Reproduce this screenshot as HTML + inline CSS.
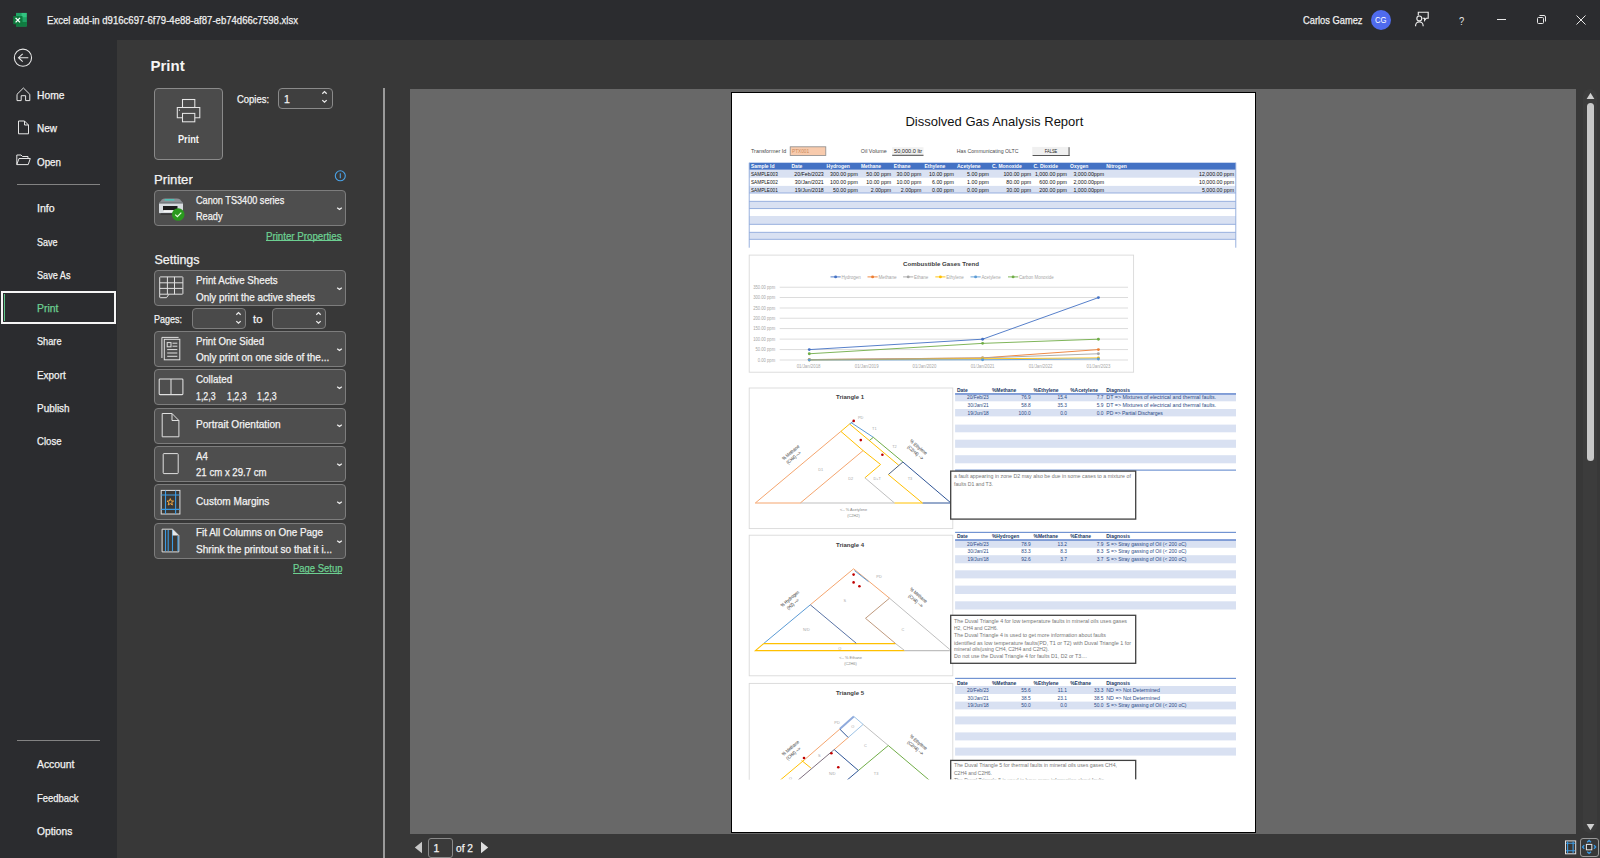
<!DOCTYPE html>
<html><head><meta charset="utf-8">
<style>
*{margin:0;padding:0;box-sizing:border-box}
html,body{width:1600px;height:858px;overflow:hidden;background:#383838;font-family:"Liberation Sans",sans-serif;color:#fff;position:relative}
.a{position:absolute}
.t{position:absolute;line-height:0;white-space:nowrap;transform-origin:0 0;-webkit-text-stroke:0.25px currentColor}
svg{overflow:visible}
</style></head>
<body>
<div class="a" style="left:0px;top:0px;width:1600px;height:40px;background:#2b2c2f"></div>
<div class="a" style="left:0px;top:40px;width:117px;height:818px;background:#2b2c2f"></div>
<svg class="a" style="left:12px;top:12px;" width="16" height="16" viewBox="0 0 16 16"><rect x="4" y="0.9" width="10.7" height="13.6" rx="0.6" fill="#1e9e5e"/>
<rect x="9.3" y="0.9" width="5.4" height="4.6" fill="#33c481"/><rect x="4" y="0.9" width="5.3" height="4.6" fill="#21a366"/>
<rect x="9.3" y="5.5" width="5.4" height="4.5" fill="#21a366"/>
<rect x="4" y="10" width="10.7" height="4.5" fill="#107c41"/>
<rect x="1.2" y="4" width="9.3" height="8.2" rx="0.6" fill="#0f7a3e"/>
<path d="M3.6 5.9 L8 10.4 M8 5.9 L3.6 10.4" stroke="#fff" stroke-width="1.35"/></svg>
<div class="t" style="left:47.00px;top:19.83px;font-size:10.5px;color:#f0f0f0;transform:scaleX(0.9111);">Excel add-in d916c697-6f79-4e88-af87-eb74d66c7598.xlsx</div>
<div class="t" style="left:1302.50px;top:20.23px;font-size:10.5px;color:#f0f0f0;transform:scaleX(0.8868);">Carlos Gamez</div>
<div class="a" style="left:1371px;top:10px;width:20px;height:20px;border-radius:50%;background:#4f6bed"></div>
<div class="t" style="left:1375.45px;top:20.14px;font-size:9px;color:#ffffff;transform:scaleX(0.8519);-webkit-text-stroke:0">CG</div>
<svg class="a" style="left:1408px;top:8px;" width="28" height="22" viewBox="0 0 28 22"><g fill="none" stroke="#ececec" stroke-width="1.15">
<path d="M10.3 7.6 V4.2 H20.2 V10.2 H18.3 L16.6 12.3 V10.2 H14.6"/>
<circle cx="11.3" cy="10.4" r="2.45"/>
<path d="M7.6 18.2 V17.6 A3.75 3.75 0 0 1 15.1 17.6 V18.2"/></g></svg>
<div class="t" style="left:1458.60px;top:20.66px;font-size:11px;color:#e8e8e8;transform:scaleX(0.8501);-webkit-text-stroke:0">?</div>
<div class="a" style="left:1497px;top:19px;width:9px;height:1px;background:#e8e8e8"></div>
<svg class="a" style="left:1536px;top:14px;" width="11" height="11" viewBox="0 0 11 11"><g fill="none" stroke="#e8e8e8" stroke-width="1">
<rect x="1.5" y="3.5" width="6" height="6" rx="1"/>
<path d="M3.5 1.5 H8 Q9.5 1.5 9.5 3 V7.5"/></g></svg>
<svg class="a" style="left:1576px;top:15px;" width="10" height="10" viewBox="0 0 10 10"><path d="M0.5 0.5 L9.5 9.5 M9.5 0.5 L0.5 9.5" stroke="#e8e8e8" stroke-width="1"/></svg>
<svg class="a" style="left:13px;top:48px;" width="20" height="20" viewBox="0 0 20 20"><g fill="none" stroke="#e6e6e6" stroke-width="1.1">
<circle cx="9.95" cy="9.7" r="8.6"/>
<path d="M5.4 9.7 H15.3 M9.7 5.9 L5.5 9.7 L9.7 13.6"/></g></svg>
<svg class="a" style="left:16px;top:87px;" width="15" height="15" viewBox="0 0 15 15"><path d="M1 7.3 L7.4 1 L13.8 7.3 V13.6 H9.6 V8.7 H5.2 V13.6 H1 Z" fill="none" stroke="#e6e6e6" stroke-width="1"/></svg>
<svg class="a" style="left:17px;top:120px;" width="13" height="15" viewBox="0 0 13 15"><path d="M1.5 1 H7.5 L11.5 5 V13.8 H1.5 Z M7.5 1 V5 H11.5" fill="none" stroke="#e6e6e6" stroke-width="1"/></svg>
<svg class="a" style="left:16px;top:154px;" width="15" height="12" viewBox="0 0 15 12"><path d="M0.8 10.6 V1 H5 L6.5 2.5 H12 V4.5 M0.8 10.6 L3 4.5 H14.3 L12.2 10.6 Z" fill="none" stroke="#e6e6e6" stroke-width="1"/></svg>
<div class="t" style="left:36.70px;top:94.83px;font-size:10.5px;color:#f3f3f3;transform:scaleX(0.9783);">Home</div>
<div class="t" style="left:36.70px;top:128.23px;font-size:10.5px;color:#f3f3f3;transform:scaleX(0.9522);">New</div>
<div class="t" style="left:36.70px;top:161.63px;font-size:10.5px;color:#f3f3f3;transform:scaleX(0.9344);">Open</div>
<div class="t" style="left:36.70px;top:208.33px;font-size:10.5px;color:#f3f3f3;transform:scaleX(1.0107);">Info</div>
<div class="t" style="left:36.70px;top:241.83px;font-size:10.5px;color:#f3f3f3;transform:scaleX(0.8566);">Save</div>
<div class="t" style="left:36.70px;top:274.83px;font-size:10.5px;color:#f3f3f3;transform:scaleX(0.8696);">Save As</div>
<div class="t" style="left:36.70px;top:341.23px;font-size:10.5px;color:#f3f3f3;transform:scaleX(0.8745);">Share</div>
<div class="t" style="left:36.70px;top:374.93px;font-size:10.5px;color:#f3f3f3;transform:scaleX(0.9458);">Export</div>
<div class="t" style="left:36.70px;top:408.43px;font-size:10.5px;color:#f3f3f3;transform:scaleX(0.9467);">Publish</div>
<div class="t" style="left:36.70px;top:441.43px;font-size:10.5px;color:#f3f3f3;transform:scaleX(0.9127);">Close</div>
<div class="t" style="left:36.70px;top:764.43px;font-size:10.5px;color:#f3f3f3;transform:scaleX(0.9885);">Account</div>
<div class="t" style="left:36.70px;top:797.68px;font-size:10.5px;color:#f3f3f3;transform:scaleX(0.9001);">Feedback</div>
<div class="t" style="left:36.70px;top:830.93px;font-size:10.5px;color:#f3f3f3;transform:scaleX(0.9742);">Options</div>
<div class="a" style="left:17px;top:184px;width:83px;height:1px;background:#838383"></div>
<div class="a" style="left:17px;top:740px;width:83px;height:1px;background:#838383"></div>
<div class="a" style="left:1px;top:291px;width:115px;height:33px;border:2px solid #f5f5f5;background:#2b2c2f"></div>
<div class="a" style="left:3.5px;top:294px;width:1.6px;height:26.5px;background:#5cc486"></div>
<div class="t" style="left:36.50px;top:307.83px;font-size:10.5px;color:#6ccf91;transform:scaleX(0.9912);">Print</div>
<div class="t" style="left:150.50px;top:65.90px;font-size:15px;color:#f5f5f5;font-weight:bold;-webkit-text-stroke:0">Print</div>
<div class="a" style="left:154px;top:88px;width:69px;height:72px;background:#4b4b4b;border:1px solid #8a8a8a;border-radius:4px"></div>
<svg class="a" style="left:176px;top:98px;" width="25" height="25" viewBox="0 0 25 25"><g fill="none" stroke="#e6e6e6" stroke-width="1.05">
<rect x="6.5" y="1.5" width="12.3" height="8"/>
<path d="M6.5 19.8 H1.3 V9.5 H23.8 V19.8 H18.8"/>
<rect x="6.5" y="15.4" width="12.3" height="8.4"/>
<path d="M3.4 11.5 V12.8"/></g></svg>
<div class="t" style="left:177.80px;top:139.03px;font-size:10.5px;color:#f5f5f5;font-weight:bold;transform:scaleX(0.8739);-webkit-text-stroke:0">Print</div>
<div class="t" style="left:237.20px;top:99.33px;font-size:10.5px;color:#f3f3f3;transform:scaleX(0.9017);">Copies:</div>
<div class="a" style="left:278px;top:88px;width:55px;height:21px;background:#3f3f3f;border:1px solid #8a8a8a;border-radius:4px"></div>
<div class="t" style="left:284.00px;top:99.33px;font-size:10.5px;color:#f3f3f3;">1</div>
<svg class="a" style="left:320.7px;top:90.1px;" width="7" height="14" viewBox="0 0 7 14"><path d="M1.3 3.7 L3.5 1.6 L5.7 3.7 M1.3 10.1 L3.5 12.2 L5.7 10.1" fill="none" stroke="#ececec" stroke-width="1.3"/></svg>
<div class="t" style="left:154.40px;top:179.75px;font-size:12.5px;color:#f3f3f3;transform:scaleX(1.0539);">Printer</div>
<svg class="a" style="left:334px;top:170px;" width="12" height="12" viewBox="0 0 12 12"><g fill="none" stroke="#4aa3e8" stroke-width="1.1"><circle cx="6.3" cy="5.8" r="5"/><path d="M6.3 3.3 V8.3"/></g></svg>
<div class="a" style="left:154px;top:190px;width:192px;height:36px;background:#4e4e4e;border:1px solid #7d7d7d;border-radius:4px"></div>
<svg class="a" style="left:335.6px;top:205.5px;" width="7" height="5" viewBox="0 0 7 5"><path d="M1.2 1.7 L3.5 3.5 L5.8 1.7" fill="none" stroke="#f0f0f0" stroke-width="1.25"/></svg>
<svg class="a" style="left:158px;top:197px;" width="28" height="26" viewBox="0 0 28 26">
<path d="M4 2.5 Q5 1.5 7 1.5 H19 Q21 1.5 22 2.5 L24.5 5.5 H1.5 Z" fill="#8a8e93"/>
<rect x="6.5" y="2.2" width="10" height="1.4" rx="0.7" fill="#3fd0c0"/>
<rect x="1" y="5.3" width="24" height="11" rx="0.8" fill="#d8dce0"/>
<rect x="1" y="5.3" width="24" height="1.2" fill="#5b5f63"/>
<rect x="5" y="9" width="14.5" height="4.2" fill="#1c1c1c"/>
<rect x="5.5" y="13.2" width="12" height="1.8" fill="#f4f4f4"/>
<rect x="2.5" y="16.3" width="17" height="1.4" fill="#333"/>
<circle cx="20.2" cy="17.5" r="6.3" fill="#2a9a1e"/>
<path d="M17.2 17.6 L19.4 19.7 L23.3 15.6" fill="none" stroke="#e8ffe0" stroke-width="1.2"/></svg>
<div class="t" style="left:196.20px;top:199.73px;font-size:10.5px;color:#f3f3f3;transform:scaleX(0.8701);">Canon TS3400 series</div>
<div class="t" style="left:196.20px;top:216.33px;font-size:10.5px;color:#f3f3f3;transform:scaleX(0.8731);">Ready</div>
<div class="t" style="left:266.40px;top:235.93px;font-size:10.5px;color:#6ccf91;transform:scaleX(0.9242);">Printer Properties</div>
<div class="a" style="left:266.4px;top:240.3px;width:75.5px;height:1px;background:#6ccf91"></div>
<div class="t" style="left:154.40px;top:259.75px;font-size:12.5px;color:#f3f3f3;">Settings</div>
<div class="a" style="left:154px;top:270.2px;width:192px;height:36px;background:#4e4e4e;border:1px solid #7d7d7d;border-radius:4px"></div>
<svg class="a" style="left:335.6px;top:285.7px;" width="7" height="5" viewBox="0 0 7 5"><path d="M1.2 1.7 L3.5 3.5 L5.8 1.7" fill="none" stroke="#f0f0f0" stroke-width="1.25"/></svg>
<svg class="a" style="left:158px;top:275px;" width="27" height="25" viewBox="0 0 27 25"><g fill="none" stroke="#e0e0e0" stroke-width="1">
<path d="M1.7 19.2 V2.5 Q1.7 1.9 2.3 1.9 H24.4 Q24.9 1.9 24.9 2.5 V18.5 Q24.9 19.2 24.3 19.2 H11 L8.5 22.7 H2.3 Q1.7 22.7 1.7 22.1 Z"/>
<path d="M1.7 7.8 H24.9 M1.7 13.4 H24.9 M9.4 1.9 V19.2 M16.5 1.9 V19.2 M1.7 19.2 H11"/></g></svg>
<div class="t" style="left:196.20px;top:280.03px;font-size:10.5px;color:#f3f3f3;transform:scaleX(0.9260);">Print Active Sheets</div>
<div class="t" style="left:196.20px;top:296.63px;font-size:10.5px;color:#f3f3f3;transform:scaleX(0.9397);">Only print the active sheets</div>
<div class="t" style="left:154.40px;top:319.13px;font-size:10.5px;color:#f3f3f3;transform:scaleX(0.8566);">Pages:</div>
<div class="a" style="left:192px;top:308.3px;width:54px;height:20.5px;background:#4a4a4a;border:1px solid #7d7d7d;border-radius:4px"></div>
<svg class="a" style="left:234.7px;top:310.6px;" width="7" height="14" viewBox="0 0 7 14"><path d="M1.3 3.7 L3.5 1.6 L5.7 3.7 M1.3 10.1 L3.5 12.2 L5.7 10.1" fill="none" stroke="#ececec" stroke-width="1.3"/></svg>
<div class="t" style="left:253.30px;top:319.13px;font-size:10.5px;color:#f3f3f3;transform:scaleX(1.0735);">to</div>
<div class="a" style="left:272px;top:308.3px;width:54px;height:20.5px;background:#4a4a4a;border:1px solid #7d7d7d;border-radius:4px"></div>
<svg class="a" style="left:314.7px;top:310.6px;" width="7" height="14" viewBox="0 0 7 14"><path d="M1.3 3.7 L3.5 1.6 L5.7 3.7 M1.3 10.1 L3.5 12.2 L5.7 10.1" fill="none" stroke="#ececec" stroke-width="1.3"/></svg>
<div class="a" style="left:154px;top:331.3px;width:192px;height:36px;background:#4e4e4e;border:1px solid #7d7d7d;border-radius:4px"></div>
<svg class="a" style="left:335.6px;top:346.8px;" width="7" height="5" viewBox="0 0 7 5"><path d="M1.2 1.7 L3.5 3.5 L5.8 1.7" fill="none" stroke="#f0f0f0" stroke-width="1.25"/></svg>
<svg class="a" style="left:160px;top:335px;" width="22" height="27" viewBox="0 0 22 27"><g fill="none" stroke="#e0e0e0" stroke-width="1">
<path d="M1.9 23 V2.4 H18.6"/>
<rect x="4.3" y="4.3" width="15.5" height="20.5"/>
<rect x="7.2" y="7.6" width="3.8" height="4.2"/>
<path d="M12.5 8.2 H17.3 M12.5 11.2 H17.3 M7.2 14.6 H17.3 M7.2 18 H17.3 M7.2 21.3 H17.3"/></g></svg>
<div class="t" style="left:196.20px;top:340.83px;font-size:10.5px;color:#f3f3f3;transform:scaleX(0.9174);">Print One Sided</div>
<div class="t" style="left:196.20px;top:357.43px;font-size:10.5px;color:#f3f3f3;transform:scaleX(0.9509);">Only print on one side of the...</div>
<div class="a" style="left:154px;top:369.4px;width:192px;height:36px;background:#4e4e4e;border:1px solid #7d7d7d;border-radius:4px"></div>
<svg class="a" style="left:335.6px;top:384.9px;" width="7" height="5" viewBox="0 0 7 5"><path d="M1.2 1.7 L3.5 3.5 L5.8 1.7" fill="none" stroke="#f0f0f0" stroke-width="1.25"/></svg>
<svg class="a" style="left:158px;top:378px;" width="26" height="18" viewBox="0 0 26 18"><g fill="none" stroke="#e0e0e0" stroke-width="1.05"><rect x="1.2" y="1" width="23.7" height="15.6" rx="0.8"/><path d="M13 1 V16.6"/></g></svg>
<div class="t" style="left:196.20px;top:379.43px;font-size:10.5px;color:#f3f3f3;transform:scaleX(0.9371);">Collated</div>
<div class="t" style="left:196.20px;top:395.83px;font-size:10.5px;color:#f3f3f3;transform:scaleX(0.8351);">1,2,3</div>
<div class="t" style="left:226.60px;top:395.83px;font-size:10.5px;color:#f3f3f3;transform:scaleX(0.8351);">1,2,3</div>
<div class="t" style="left:256.80px;top:395.83px;font-size:10.5px;color:#f3f3f3;transform:scaleX(0.8351);">1,2,3</div>
<div class="a" style="left:154px;top:407.9px;width:192px;height:36px;background:#4e4e4e;border:1px solid #7d7d7d;border-radius:4px"></div>
<svg class="a" style="left:335.6px;top:423.4px;" width="7" height="5" viewBox="0 0 7 5"><path d="M1.2 1.7 L3.5 3.5 L5.8 1.7" fill="none" stroke="#f0f0f0" stroke-width="1.25"/></svg>
<svg class="a" style="left:161px;top:412px;" width="20" height="26" viewBox="0 0 20 26"><path d="M1.2 1.5 H11 L17.9 8.5 V24.8 H1.2 Z M11 1.5 V8.5 H17.9" fill="none" stroke="#e0e0e0" stroke-width="1"/></svg>
<div class="t" style="left:196.20px;top:424.03px;font-size:10.5px;color:#f3f3f3;transform:scaleX(0.9601);">Portrait Orientation</div>
<div class="a" style="left:154px;top:446.3px;width:192px;height:36px;background:#4e4e4e;border:1px solid #7d7d7d;border-radius:4px"></div>
<svg class="a" style="left:335.6px;top:461.8px;" width="7" height="5" viewBox="0 0 7 5"><path d="M1.2 1.7 L3.5 3.5 L5.8 1.7" fill="none" stroke="#f0f0f0" stroke-width="1.25"/></svg>
<svg class="a" style="left:162px;top:452px;" width="18" height="23" viewBox="0 0 18 23"><rect x="1.2" y="1.6" width="15" height="20" rx="0.8" fill="none" stroke="#e0e0e0" stroke-width="1"/></svg>
<div class="t" style="left:196.20px;top:455.73px;font-size:10.5px;color:#f3f3f3;transform:scaleX(0.9266);">A4</div>
<div class="t" style="left:196.20px;top:472.33px;font-size:10.5px;color:#f3f3f3;transform:scaleX(0.9166);">21 cm x 29.7 cm</div>
<div class="a" style="left:154px;top:484.4px;width:192px;height:36px;background:#4e4e4e;border:1px solid #7d7d7d;border-radius:4px"></div>
<svg class="a" style="left:335.6px;top:499.9px;" width="7" height="5" viewBox="0 0 7 5"><path d="M1.2 1.7 L3.5 3.5 L5.8 1.7" fill="none" stroke="#f0f0f0" stroke-width="1.25"/></svg>
<svg class="a" style="left:160px;top:489px;" width="21" height="27" viewBox="0 0 21 27"><rect x="1.2" y="1.4" width="18.7" height="23.6" fill="#3b3834" stroke="#e0e0e0" stroke-width="1"/>
<path d="M5.5 1.4 V25 M15.6 1.4 V25 M1.2 6 H19.9 M1.2 20.4 H19.9" stroke="#3c9be3" stroke-width="1.1"/>
<path d="M10.3 9.6 L11.2 12 L13.6 12.1 L11.7 13.6 L12.4 16 L10.3 14.6 L8.2 16 L8.9 13.6 L7 12.1 L9.4 12 Z" fill="none" stroke="#f0a844" stroke-width="1"/></svg>
<div class="t" style="left:196.20px;top:500.83px;font-size:10.5px;color:#f3f3f3;transform:scaleX(0.9603);">Custom Margins</div>
<div class="a" style="left:154px;top:523.2px;width:192px;height:36px;background:#4e4e4e;border:1px solid #7d7d7d;border-radius:4px"></div>
<svg class="a" style="left:335.6px;top:538.7px;" width="7" height="5" viewBox="0 0 7 5"><path d="M1.2 1.7 L3.5 3.5 L5.8 1.7" fill="none" stroke="#f0f0f0" stroke-width="1.25"/></svg>
<svg class="a" style="left:161px;top:528px;" width="19" height="26" viewBox="0 0 19 26"><path d="M1.1 1.2 H11.5 L17.8 7.5 V23.9 H1.1 Z" fill="#3b3834" stroke="#e0e0e0" stroke-width="1"/>
<path d="M4.5 2 V23.2 M7.2 2 V23.2 M11.5 2 V23.2 M16.9 8 V23.2" stroke="#3c9be3" stroke-width="1.1"/>
<path d="M11.5 1.2 V7.5 H17.8 Z" fill="#e8e8e8"/></svg>
<div class="t" style="left:196.20px;top:532.33px;font-size:10.5px;color:#f3f3f3;transform:scaleX(0.9421);">Fit All Columns on One Page</div>
<div class="t" style="left:196.20px;top:549.03px;font-size:10.5px;color:#f3f3f3;transform:scaleX(0.9590);">Shrink the printout so that it i...</div>
<div class="t" style="left:292.60px;top:568.23px;font-size:10.5px;color:#6ccf91;transform:scaleX(0.9002);">Page Setup</div>
<div class="a" style="left:292.6px;top:572.8px;width:49.4px;height:1px;background:#6ccf91"></div>
<div class="a" style="left:383px;top:88px;width:2px;height:770px;background:#9a9a9a"></div>
<div class="a" style="left:410px;top:89px;width:1166px;height:745px;background:#686868"></div>
<div class="a" style="left:1583px;top:89px;width:14px;height:744px;background:#3c3c3c;border-radius:7px"></div>
<svg class="a" style="left:1586px;top:92px;" width="9" height="8" viewBox="0 0 9 8"><path d="M0.6 7 L4.5 0.8 L8.4 7 Z" fill="#d0d0d0"/></svg>
<div class="a" style="left:1586.5px;top:103px;width:7.5px;height:358px;background:#c8c8c8;border-radius:4px"></div>
<svg class="a" style="left:1586px;top:823px;" width="9" height="8" viewBox="0 0 9 8"><path d="M0.6 1 L4.5 7.2 L8.4 1 Z" fill="#d0d0d0"/></svg>
<svg class="a" style="left:414px;top:841px;" width="9" height="13" viewBox="0 0 9 13"><path d="M8 0.8 V12.2 L0.8 6.5 Z" fill="#c8c8c8"/></svg>
<div class="a" style="left:428px;top:837.5px;width:25px;height:20px;background:#3a3a3a;border:1px solid #8a8a8a;border-radius:3px"></div>
<div class="t" style="left:433.50px;top:848.43px;font-size:10.5px;color:#f3f3f3;">1</div>
<div class="t" style="left:455.50px;top:848.43px;font-size:10.5px;color:#f3f3f3;transform:scaleX(0.9708);">of 2</div>
<svg class="a" style="left:480px;top:841px;" width="9" height="13" viewBox="0 0 9 13"><path d="M1 0.8 V12.2 L8.2 6.5 Z" fill="#e0e0e0"/></svg>
<svg class="a" style="left:1564px;top:839px;" width="14" height="17" viewBox="0 0 14 17"><rect x="1.5" y="1.9" width="10.2" height="12.9" fill="#3a3531" stroke="#e0e0e0" stroke-width="1"/>
<path d="M3.6 2.4 V14.3 M9.1 2.4 V14.3 M2 4.3 H11.2 M2 11.8 H11.2" stroke="#3c9be3" stroke-width="1.1"/></svg>
<div class="a" style="left:1580px;top:838px;width:18.5px;height:18.5px;border:1px solid #9a9a9a;border-radius:3px"></div>
<svg class="a" style="left:1580px;top:838px;" width="19" height="19" viewBox="0 0 19 19"><rect x="6.4" y="6.4" width="5.4" height="5.4" fill="#2e2e2e" stroke="#e6e6e6" stroke-width="1"/>
<path d="M7.2 4.2 L9.1 2.5 L11 4.2 M7.2 13.8 L9.1 15.4 L11 13.8 M4.2 7.1 L2.6 9 L4.2 10.9 M14 7.1 L15.6 9 L14 10.9" fill="none" stroke="#3c9be3" stroke-width="1.4"/></svg>
<div class="a" style="left:731px;top:92px;width:525px;height:741px;background:#fff;border:1px solid #000"></div>
<svg class="a" style="left:0;top:0;font-family:'Liberation Sans',sans-serif" width="1600" height="858" viewBox="0 0 1600 858"><clipPath id="pc"><rect x="733" y="93" width="521" height="686.8"/></clipPath><g clip-path="url(#pc)"><text x="905.40" y="125.98" font-size="13" fill="#111" textLength="177.90" lengthAdjust="spacingAndGlyphs" text-anchor="start">Dissolved Gas Analysis Report</text>
<text x="751.00" y="153.17" font-size="5.2" fill="#4a4a4a" textLength="35.20" lengthAdjust="spacingAndGlyphs" text-anchor="start">Transformer Id</text>
<rect x="790.20" y="146.80" width="35.60" height="8.70" fill="#f8cbad" stroke="#8a8a8a" stroke-width="0.8"/>
<text x="792.00" y="153.17" font-size="5.2" fill="#c98a5c" textLength="17.00" lengthAdjust="spacingAndGlyphs" text-anchor="start">PTX001</text>
<text x="860.80" y="153.17" font-size="5.2" fill="#4a4a4a" textLength="26.00" lengthAdjust="spacingAndGlyphs" text-anchor="start">Oil Volume</text>
<rect x="892.20" y="147.20" width="31.30" height="8.30" fill="#f2f2f2"/>
<rect x="892.20" y="154.80" width="31.30" height="0.90" fill="#333"/>
<text x="894.00" y="153.17" font-size="5.2" fill="#222" textLength="28.20" lengthAdjust="spacingAndGlyphs" text-anchor="start">50,000.0 ltr</text>
<text x="956.80" y="153.17" font-size="5.2" fill="#4a4a4a" textLength="61.70" lengthAdjust="spacingAndGlyphs" text-anchor="start">Has Communicating OLTC</text>
<rect x="1032.20" y="146.90" width="37.10" height="8.90" fill="#f0f0f0"/>
<rect x="1032.60" y="155.00" width="37.00" height="0.90" fill="#444"/>
<rect x="1068.60" y="147.20" width="0.90" height="8.70" fill="#444"/>
<text x="1051.00" y="153.17" font-size="5.2" fill="#222" textLength="12.50" lengthAdjust="spacingAndGlyphs" text-anchor="middle">FALSE</text>
<rect x="749.20" y="162.70" width="486.60" height="7.10" fill="#4472c4"/>
<rect x="749.20" y="169.80" width="486.60" height="7.90" fill="#d9e1f2"/>
<rect x="749.20" y="185.90" width="486.60" height="7.10" fill="#d9e1f2"/>
<rect x="749.20" y="201.30" width="486.60" height="7.30" fill="#d9e1f2"/>
<rect x="749.20" y="216.00" width="486.60" height="8.30" fill="#d9e1f2"/>
<rect x="749.20" y="232.30" width="486.60" height="7.00" fill="#d9e1f2"/>
<rect x="749.20" y="192.55" width="486.60" height="0.90" fill="#8ea9db"/>
<rect x="749.20" y="200.85" width="486.60" height="0.90" fill="#8ea9db"/>
<rect x="749.20" y="208.15" width="486.60" height="0.90" fill="#8ea9db"/>
<rect x="749.20" y="223.85" width="486.60" height="0.90" fill="#8ea9db"/>
<rect x="749.20" y="231.85" width="486.60" height="0.90" fill="#8ea9db"/>
<rect x="749.20" y="238.85" width="486.60" height="0.90" fill="#8ea9db"/>
<rect x="748.75" y="162.70" width="0.90" height="85.00" fill="#8ea9db"/>
<rect x="1235.35" y="162.70" width="0.90" height="85.00" fill="#8ea9db"/>
<text x="750.90" y="168.27" font-size="5.2" fill="#ffffff" textLength="23.58" lengthAdjust="spacingAndGlyphs" text-anchor="start" font-weight="bold">Sample Id</text>
<text x="791.50" y="168.27" font-size="5.2" fill="#ffffff" textLength="10.82" lengthAdjust="spacingAndGlyphs" text-anchor="start" font-weight="bold">Date</text>
<text x="826.60" y="168.27" font-size="5.2" fill="#ffffff" textLength="23.30" lengthAdjust="spacingAndGlyphs" text-anchor="start" font-weight="bold">Hydrogen</text>
<text x="860.90" y="168.27" font-size="5.2" fill="#ffffff" textLength="20.25" lengthAdjust="spacingAndGlyphs" text-anchor="start" font-weight="bold">Methane</text>
<text x="893.80" y="168.27" font-size="5.2" fill="#ffffff" textLength="16.64" lengthAdjust="spacingAndGlyphs" text-anchor="start" font-weight="bold">Ethane</text>
<text x="924.50" y="168.27" font-size="5.2" fill="#ffffff" textLength="20.80" lengthAdjust="spacingAndGlyphs" text-anchor="start" font-weight="bold">Ethylene</text>
<text x="957.00" y="168.27" font-size="5.2" fill="#ffffff" textLength="23.58" lengthAdjust="spacingAndGlyphs" text-anchor="start" font-weight="bold">Acetylene</text>
<text x="992.00" y="168.27" font-size="5.2" fill="#ffffff" textLength="29.67" lengthAdjust="spacingAndGlyphs" text-anchor="start" font-weight="bold">C. Monoxide</text>
<text x="1033.50" y="168.27" font-size="5.2" fill="#ffffff" textLength="24.41" lengthAdjust="spacingAndGlyphs" text-anchor="start" font-weight="bold">C. Dioxide</text>
<text x="1070.10" y="168.27" font-size="5.2" fill="#ffffff" textLength="18.31" lengthAdjust="spacingAndGlyphs" text-anchor="start" font-weight="bold">Oxygen</text>
<text x="1106.20" y="168.27" font-size="5.2" fill="#ffffff" textLength="20.52" lengthAdjust="spacingAndGlyphs" text-anchor="start" font-weight="bold">Nitrogen</text>
<text x="751.00" y="176.37" font-size="5.2" fill="#111" textLength="26.80" lengthAdjust="spacingAndGlyphs" text-anchor="start">SAMPLE003</text>
<text x="823.80" y="176.37" font-size="5.2" fill="#111" textLength="29.49" lengthAdjust="spacingAndGlyphs" text-anchor="end">20/Feb/2023</text>
<text x="857.80" y="176.37" font-size="5.2" fill="#111" textLength="27.74" lengthAdjust="spacingAndGlyphs" text-anchor="end">300.00 ppm</text>
<text x="891.20" y="176.37" font-size="5.2" fill="#111" textLength="24.82" lengthAdjust="spacingAndGlyphs" text-anchor="end">50.00 ppm</text>
<text x="921.30" y="176.37" font-size="5.2" fill="#111" textLength="24.82" lengthAdjust="spacingAndGlyphs" text-anchor="end">30.00 ppm</text>
<text x="953.90" y="176.37" font-size="5.2" fill="#111" textLength="24.82" lengthAdjust="spacingAndGlyphs" text-anchor="end">10.00 ppm</text>
<text x="989.00" y="176.37" font-size="5.2" fill="#111" textLength="21.90" lengthAdjust="spacingAndGlyphs" text-anchor="end">5.00 ppm</text>
<text x="1031.20" y="176.37" font-size="5.2" fill="#111" textLength="27.74" lengthAdjust="spacingAndGlyphs" text-anchor="end">100.00 ppm</text>
<text x="1067.00" y="176.37" font-size="5.2" fill="#111" textLength="32.12" lengthAdjust="spacingAndGlyphs" text-anchor="end">1,000.00 ppm</text>
<text x="1104.10" y="176.37" font-size="5.2" fill="#111" textLength="30.66" lengthAdjust="spacingAndGlyphs" text-anchor="end">3,000.00ppm</text>
<text x="1234.10" y="176.37" font-size="5.2" fill="#111" textLength="35.04" lengthAdjust="spacingAndGlyphs" text-anchor="end">12,000.00 ppm</text>
<text x="751.00" y="183.97" font-size="5.2" fill="#111" textLength="26.80" lengthAdjust="spacingAndGlyphs" text-anchor="start">SAMPLE002</text>
<text x="823.80" y="183.97" font-size="5.2" fill="#111" textLength="28.91" lengthAdjust="spacingAndGlyphs" text-anchor="end">30/Jan/2021</text>
<text x="857.80" y="183.97" font-size="5.2" fill="#111" textLength="27.74" lengthAdjust="spacingAndGlyphs" text-anchor="end">100.00 ppm</text>
<text x="891.20" y="183.97" font-size="5.2" fill="#111" textLength="24.82" lengthAdjust="spacingAndGlyphs" text-anchor="end">10.00 ppm</text>
<text x="921.30" y="183.97" font-size="5.2" fill="#111" textLength="24.82" lengthAdjust="spacingAndGlyphs" text-anchor="end">10.00 ppm</text>
<text x="953.90" y="183.97" font-size="5.2" fill="#111" textLength="21.90" lengthAdjust="spacingAndGlyphs" text-anchor="end">6.00 ppm</text>
<text x="989.00" y="183.97" font-size="5.2" fill="#111" textLength="21.90" lengthAdjust="spacingAndGlyphs" text-anchor="end">1.00 ppm</text>
<text x="1031.20" y="183.97" font-size="5.2" fill="#111" textLength="24.82" lengthAdjust="spacingAndGlyphs" text-anchor="end">80.00 ppm</text>
<text x="1067.00" y="183.97" font-size="5.2" fill="#111" textLength="27.74" lengthAdjust="spacingAndGlyphs" text-anchor="end">600.00 ppm</text>
<text x="1104.10" y="183.97" font-size="5.2" fill="#111" textLength="30.66" lengthAdjust="spacingAndGlyphs" text-anchor="end">2,000.00ppm</text>
<text x="1234.10" y="183.97" font-size="5.2" fill="#111" textLength="35.04" lengthAdjust="spacingAndGlyphs" text-anchor="end">10,000.00 ppm</text>
<text x="751.00" y="191.57" font-size="5.2" fill="#111" textLength="26.80" lengthAdjust="spacingAndGlyphs" text-anchor="start">SAMPLE001</text>
<text x="823.80" y="191.57" font-size="5.2" fill="#111" textLength="28.91" lengthAdjust="spacingAndGlyphs" text-anchor="end">19/Jun/2018</text>
<text x="857.80" y="191.57" font-size="5.2" fill="#111" textLength="24.82" lengthAdjust="spacingAndGlyphs" text-anchor="end">50.00 ppm</text>
<text x="891.20" y="191.57" font-size="5.2" fill="#111" textLength="20.44" lengthAdjust="spacingAndGlyphs" text-anchor="end">2.00ppm</text>
<text x="921.30" y="191.57" font-size="5.2" fill="#111" textLength="20.44" lengthAdjust="spacingAndGlyphs" text-anchor="end">2.00ppm</text>
<text x="953.90" y="191.57" font-size="5.2" fill="#111" textLength="21.90" lengthAdjust="spacingAndGlyphs" text-anchor="end">0.00 ppm</text>
<text x="989.00" y="191.57" font-size="5.2" fill="#111" textLength="21.90" lengthAdjust="spacingAndGlyphs" text-anchor="end">0.00 ppm</text>
<text x="1031.20" y="191.57" font-size="5.2" fill="#111" textLength="24.82" lengthAdjust="spacingAndGlyphs" text-anchor="end">30.00 ppm</text>
<text x="1067.00" y="191.57" font-size="5.2" fill="#111" textLength="27.74" lengthAdjust="spacingAndGlyphs" text-anchor="end">200.00 ppm</text>
<text x="1104.10" y="191.57" font-size="5.2" fill="#111" textLength="30.66" lengthAdjust="spacingAndGlyphs" text-anchor="end">1,000.00ppm</text>
<text x="1234.10" y="191.57" font-size="5.2" fill="#111" textLength="32.12" lengthAdjust="spacingAndGlyphs" text-anchor="end">5,000.00 ppm</text>
<rect x="749.20" y="255.10" width="384.40" height="117.10" fill="#fff" stroke="#d9d9d9" stroke-width="0.9"/>
<text x="941.00" y="266.03" font-size="6.2" fill="#404040" textLength="76.00" lengthAdjust="spacingAndGlyphs" text-anchor="middle" font-weight="bold">Combustible Gases Trend</text>
<rect x="779.70" y="359.55" width="348.30" height="0.90" fill="#d9d9d9"/>
<text x="775.10" y="361.66" font-size="4.6" fill="#a6a6a6" textLength="17.26" lengthAdjust="spacingAndGlyphs" text-anchor="end">0.00 ppm</text>
<rect x="779.70" y="349.15" width="348.30" height="0.90" fill="#d9d9d9"/>
<text x="775.10" y="351.26" font-size="4.6" fill="#a6a6a6" textLength="19.56" lengthAdjust="spacingAndGlyphs" text-anchor="end">50.00 ppm</text>
<rect x="779.70" y="338.65" width="348.30" height="0.90" fill="#d9d9d9"/>
<text x="775.10" y="340.76" font-size="4.6" fill="#a6a6a6" textLength="21.86" lengthAdjust="spacingAndGlyphs" text-anchor="end">100.00 ppm</text>
<rect x="779.70" y="328.15" width="348.30" height="0.90" fill="#d9d9d9"/>
<text x="775.10" y="330.26" font-size="4.6" fill="#a6a6a6" textLength="21.86" lengthAdjust="spacingAndGlyphs" text-anchor="end">150.00 ppm</text>
<rect x="779.70" y="317.75" width="348.30" height="0.90" fill="#d9d9d9"/>
<text x="775.10" y="319.86" font-size="4.6" fill="#a6a6a6" textLength="21.86" lengthAdjust="spacingAndGlyphs" text-anchor="end">200.00 ppm</text>
<rect x="779.70" y="307.55" width="348.30" height="0.90" fill="#d9d9d9"/>
<text x="775.10" y="309.66" font-size="4.6" fill="#a6a6a6" textLength="21.86" lengthAdjust="spacingAndGlyphs" text-anchor="end">250.00 ppm</text>
<rect x="779.70" y="297.05" width="348.30" height="0.90" fill="#d9d9d9"/>
<text x="775.10" y="299.16" font-size="4.6" fill="#a6a6a6" textLength="21.86" lengthAdjust="spacingAndGlyphs" text-anchor="end">300.00 ppm</text>
<rect x="779.70" y="286.75" width="348.30" height="0.90" fill="#d9d9d9"/>
<text x="775.10" y="288.86" font-size="4.6" fill="#a6a6a6" textLength="21.86" lengthAdjust="spacingAndGlyphs" text-anchor="end">350.00 ppm</text>
<text x="808.60" y="367.86" font-size="4.6" fill="#a6a6a6" textLength="23.80" lengthAdjust="spacingAndGlyphs" text-anchor="middle">01/Jan/2018</text>
<text x="866.70" y="367.86" font-size="4.6" fill="#a6a6a6" textLength="23.80" lengthAdjust="spacingAndGlyphs" text-anchor="middle">01/Jan/2019</text>
<text x="924.40" y="367.86" font-size="4.6" fill="#a6a6a6" textLength="23.80" lengthAdjust="spacingAndGlyphs" text-anchor="middle">01/Jan/2020</text>
<text x="982.60" y="367.86" font-size="4.6" fill="#a6a6a6" textLength="23.80" lengthAdjust="spacingAndGlyphs" text-anchor="middle">01/Jan/2021</text>
<text x="1040.60" y="367.86" font-size="4.6" fill="#a6a6a6" textLength="23.80" lengthAdjust="spacingAndGlyphs" text-anchor="middle">01/Jan/2022</text>
<text x="1098.50" y="367.86" font-size="4.6" fill="#a6a6a6" textLength="23.80" lengthAdjust="spacingAndGlyphs" text-anchor="middle">01/Jan/2023</text>
<path d="M809.30 349.60 L982.60 339.20 L1098.40 297.60" fill="none" stroke="#4472c4" stroke-width="0.9" stroke-linejoin="miter"/>
<circle cx="809.30" cy="349.60" r="1.45" fill="#4472c4"/>
<circle cx="982.60" cy="339.20" r="1.45" fill="#4472c4"/>
<circle cx="1098.40" cy="297.60" r="1.45" fill="#4472c4"/>
<path d="M809.30 359.58 L982.60 357.92 L1098.40 349.60" fill="none" stroke="#ed7d31" stroke-width="0.9" stroke-linejoin="miter"/>
<circle cx="809.30" cy="359.58" r="1.45" fill="#ed7d31"/>
<circle cx="982.60" cy="357.92" r="1.45" fill="#ed7d31"/>
<circle cx="1098.40" cy="349.60" r="1.45" fill="#ed7d31"/>
<path d="M809.30 359.58 L982.60 357.92 L1098.40 353.76" fill="none" stroke="#a5a5a5" stroke-width="0.9" stroke-linejoin="miter"/>
<circle cx="809.30" cy="359.58" r="1.45" fill="#a5a5a5"/>
<circle cx="982.60" cy="357.92" r="1.45" fill="#a5a5a5"/>
<circle cx="1098.40" cy="353.76" r="1.45" fill="#a5a5a5"/>
<path d="M809.30 360.00 L982.60 358.75 L1098.40 357.92" fill="none" stroke="#ffc000" stroke-width="0.9" stroke-linejoin="miter"/>
<circle cx="809.30" cy="360.00" r="1.45" fill="#ffc000"/>
<circle cx="982.60" cy="358.75" r="1.45" fill="#ffc000"/>
<circle cx="1098.40" cy="357.92" r="1.45" fill="#ffc000"/>
<path d="M809.30 360.00 L982.60 359.79 L1098.40 358.96" fill="none" stroke="#5b9bd5" stroke-width="0.9" stroke-linejoin="miter"/>
<circle cx="809.30" cy="360.00" r="1.45" fill="#5b9bd5"/>
<circle cx="982.60" cy="359.79" r="1.45" fill="#5b9bd5"/>
<circle cx="1098.40" cy="358.96" r="1.45" fill="#5b9bd5"/>
<path d="M809.30 353.76 L982.60 343.36 L1098.40 339.20" fill="none" stroke="#70ad47" stroke-width="0.9" stroke-linejoin="miter"/>
<circle cx="809.30" cy="353.76" r="1.45" fill="#70ad47"/>
<circle cx="982.60" cy="343.36" r="1.45" fill="#70ad47"/>
<circle cx="1098.40" cy="339.20" r="1.45" fill="#70ad47"/>
<path d="M830.50 276.90 L840.70 276.90" fill="none" stroke="#4472c4" stroke-width="0.9" stroke-linejoin="miter"/>
<circle cx="835.60" cy="276.90" r="1.45" fill="#4472c4"/>
<text x="841.40" y="278.56" font-size="4.6" fill="#a6a6a6" textLength="19.40" lengthAdjust="spacingAndGlyphs" text-anchor="start">Hydrogen</text>
<path d="M867.50 276.90 L877.70 276.90" fill="none" stroke="#ed7d31" stroke-width="0.9" stroke-linejoin="miter"/>
<circle cx="872.60" cy="276.90" r="1.45" fill="#ed7d31"/>
<text x="878.40" y="278.56" font-size="4.6" fill="#a6a6a6" textLength="18.30" lengthAdjust="spacingAndGlyphs" text-anchor="start">Methane</text>
<path d="M903.10 276.90 L913.30 276.90" fill="none" stroke="#a5a5a5" stroke-width="0.9" stroke-linejoin="miter"/>
<circle cx="908.20" cy="276.90" r="1.45" fill="#a5a5a5"/>
<text x="914.00" y="278.56" font-size="4.6" fill="#a6a6a6" textLength="14.20" lengthAdjust="spacingAndGlyphs" text-anchor="start">Ethane</text>
<path d="M935.30 276.90 L945.50 276.90" fill="none" stroke="#ffc000" stroke-width="0.9" stroke-linejoin="miter"/>
<circle cx="940.40" cy="276.90" r="1.45" fill="#ffc000"/>
<text x="946.20" y="278.56" font-size="4.6" fill="#a6a6a6" textLength="17.50" lengthAdjust="spacingAndGlyphs" text-anchor="start">Ethylene</text>
<path d="M970.50 276.90 L980.70 276.90" fill="none" stroke="#5b9bd5" stroke-width="0.9" stroke-linejoin="miter"/>
<circle cx="975.60" cy="276.90" r="1.45" fill="#5b9bd5"/>
<text x="981.40" y="278.56" font-size="4.6" fill="#a6a6a6" textLength="19.30" lengthAdjust="spacingAndGlyphs" text-anchor="start">Acetylene</text>
<path d="M1008.00 276.90 L1018.20 276.90" fill="none" stroke="#70ad47" stroke-width="0.9" stroke-linejoin="miter"/>
<circle cx="1013.10" cy="276.90" r="1.45" fill="#70ad47"/>
<text x="1018.90" y="278.56" font-size="4.6" fill="#a6a6a6" textLength="34.70" lengthAdjust="spacingAndGlyphs" text-anchor="start">Carbon Monoxide</text>
<rect x="749.20" y="388.00" width="203.60" height="140.60" fill="#fff" stroke="#d9d9d9" stroke-width="0.9"/>
<rect x="749.20" y="535.20" width="203.60" height="140.60" fill="#fff" stroke="#d9d9d9" stroke-width="0.9"/>
<rect x="749.20" y="683.40" width="203.60" height="116.60" fill="#fff" stroke="#d9d9d9" stroke-width="0.9"/>
<text x="850.10" y="399.23" font-size="6.2" fill="#404040" textLength="28.00" lengthAdjust="spacingAndGlyphs" text-anchor="middle" font-weight="bold">Triangle 1</text>
<path d="M755.30 503.00 L840.90 431.40" fill="none" stroke="#f5a56e" stroke-width="1.0" stroke-linejoin="miter"/>
<path d="M840.90 431.40 L849.60 424.00" fill="none" stroke="#ffc000" stroke-width="1.0" stroke-linejoin="miter"/>
<path d="M849.60 424.00 L853.70 421.00" fill="none" stroke="#5b9bd5" stroke-width="1.0" stroke-linejoin="miter"/>
<path d="M851.00 422.50 L873.30 437.30" fill="none" stroke="#5b9bd5" stroke-width="1.0" stroke-linejoin="miter"/>
<path d="M873.30 437.30 L902.90 462.00" fill="none" stroke="#70ad47" stroke-width="1.0" stroke-linejoin="miter"/>
<path d="M902.90 462.00 L950.50 502.60" fill="none" stroke="#2f5597" stroke-width="1.0" stroke-linejoin="miter"/>
<path d="M755.30 503.00 L800.30 503.00" fill="none" stroke="#f5a56e" stroke-width="1.0" stroke-linejoin="miter"/>
<path d="M800.30 503.00 L894.50 503.00" fill="none" stroke="#bfbfbf" stroke-width="1.0" stroke-linejoin="miter"/>
<path d="M894.50 503.00 L922.50 503.00" fill="none" stroke="#ffc000" stroke-width="1.0" stroke-linejoin="miter"/>
<path d="M922.50 503.00 L950.50 503.00" fill="none" stroke="#2f5597" stroke-width="1.0" stroke-linejoin="miter"/>
<path d="M800.30 503.00 L863.10 450.60" fill="none" stroke="#f5a56e" stroke-width="1.0" stroke-linejoin="miter"/>
<path d="M840.90 431.40 L863.10 450.60 L880.60 464.50 L864.90 477.80" fill="none" stroke="#ffc000" stroke-width="1.0" stroke-linejoin="miter"/>
<path d="M864.90 477.80 L894.50 503.00" fill="none" stroke="#bfbfbf" stroke-width="1.0" stroke-linejoin="miter"/>
<path d="M849.60 424.00 L898.70 465.20" fill="none" stroke="#ffc000" stroke-width="1.0" stroke-linejoin="miter"/>
<path d="M873.30 437.30 L869.40 440.50" fill="none" stroke="#70ad47" stroke-width="1.0" stroke-linejoin="miter"/>
<path d="M902.90 462.00 L888.30 474.60" fill="none" stroke="#4a5f80" stroke-width="1.0" stroke-linejoin="miter"/>
<path d="M888.30 474.60 L922.50 503.00" fill="none" stroke="#ffc000" stroke-width="1.0" stroke-linejoin="miter"/>
<circle cx="853.70" cy="420.90" r="1.3" fill="#c00000"/>
<circle cx="860.80" cy="440.10" r="1.3" fill="#c00000"/>
<circle cx="882.40" cy="454.80" r="1.3" fill="#c00000"/>
<text x="860.70" y="419.28" font-size="4.4" fill="#a6a6a6" textLength="5.38" lengthAdjust="spacingAndGlyphs" text-anchor="middle">PD</text>
<text x="874.30" y="430.08" font-size="4.4" fill="#a6a6a6" textLength="4.52" lengthAdjust="spacingAndGlyphs" text-anchor="middle">T1</text>
<text x="894.50" y="447.68" font-size="4.4" fill="#a6a6a6" textLength="4.52" lengthAdjust="spacingAndGlyphs" text-anchor="middle">T2</text>
<text x="820.60" y="470.98" font-size="4.4" fill="#a6a6a6" textLength="4.95" lengthAdjust="spacingAndGlyphs" text-anchor="middle">D1</text>
<text x="850.70" y="480.08" font-size="4.4" fill="#a6a6a6" textLength="4.95" lengthAdjust="spacingAndGlyphs" text-anchor="middle">D2</text>
<text x="877.10" y="480.08" font-size="4.4" fill="#a6a6a6" textLength="7.42" lengthAdjust="spacingAndGlyphs" text-anchor="middle">D+T</text>
<text x="909.90" y="480.08" font-size="4.4" fill="#a6a6a6" textLength="4.52" lengthAdjust="spacingAndGlyphs" text-anchor="middle">T3</text>
<text x="790.60" y="454.19" font-size="4.7" fill="#6a6a6a" textLength="20.92" lengthAdjust="spacingAndGlyphs" text-anchor="middle" transform="rotate(-40 790.60 452.50)" stroke="#6a6a6a" stroke-width="0.12">% Methane</text>
<text x="793.60" y="459.19" font-size="4.7" fill="#6a6a6a" textLength="17.35" lengthAdjust="spacingAndGlyphs" text-anchor="middle" transform="rotate(-40 793.60 457.50)" stroke="#6a6a6a" stroke-width="0.12">(CH4) --&gt;</text>
<text x="918.50" y="448.69" font-size="4.7" fill="#6a6a6a" textLength="20.92" lengthAdjust="spacingAndGlyphs" text-anchor="middle" transform="rotate(40 918.50 447.00)" stroke="#6a6a6a" stroke-width="0.12">% Ethylene</text>
<text x="915.50" y="454.19" font-size="4.7" fill="#6a6a6a" textLength="19.65" lengthAdjust="spacingAndGlyphs" text-anchor="middle" transform="rotate(40 915.50 452.50)" stroke="#6a6a6a" stroke-width="0.12">(C2H4) --&gt;</text>
<text x="853.50" y="511.18" font-size="4.4" fill="#868686" textLength="27.22" lengthAdjust="spacingAndGlyphs" text-anchor="middle">&lt;-- % Acetylene</text>
<text x="853.50" y="516.78" font-size="4.4" fill="#868686" textLength="12.48" lengthAdjust="spacingAndGlyphs" text-anchor="middle">(C2H2)</text>
<text x="850.10" y="547.13" font-size="6.2" fill="#404040" textLength="28.00" lengthAdjust="spacingAndGlyphs" text-anchor="middle" font-weight="bold">Triangle 4</text>
<path d="M810.30 604.80 L853.60 568.80 L889.50 598.20" fill="none" stroke="#f5a56e" stroke-width="1.0" stroke-linejoin="miter"/>
<path d="M810.30 604.80 L763.60 643.60" fill="none" stroke="#5b9bd5" stroke-width="1.0" stroke-linejoin="miter"/>
<path d="M763.60 643.60 L755.40 650.60 L904.70 650.60" fill="none" stroke="#ffc000" stroke-width="1.1" stroke-linejoin="miter"/>
<path d="M763.60 643.60 L895.60 643.60" fill="none" stroke="#ffc000" stroke-width="1.1" stroke-linejoin="miter"/>
<path d="M904.70 650.60 L949.80 650.60" fill="none" stroke="#bfbfbf" stroke-width="1.1" stroke-linejoin="miter"/>
<path d="M889.50 598.20 L949.80 649.50" fill="none" stroke="#bfbfbf" stroke-width="1.0" stroke-linejoin="miter"/>
<path d="M895.60 643.60 L904.70 650.60" fill="none" stroke="#bfbfbf" stroke-width="1.0" stroke-linejoin="miter"/>
<path d="M810.30 604.80 L856.30 643.30" fill="none" stroke="#5a74a6" stroke-width="1.0" stroke-linejoin="miter"/>
<path d="M889.50 598.20 L865.50 618.30 L895.60 643.60" fill="none" stroke="#c09a7e" stroke-width="1.0" stroke-linejoin="miter"/>
<path d="M854.50 570.60 L868.50 581.60" fill="none" stroke="#5b9bd5" stroke-width="1.0" stroke-linejoin="miter"/>
<circle cx="853.60" cy="574.60" r="1.3" fill="#c00000"/>
<circle cx="853.60" cy="582.40" r="1.3" fill="#c00000"/>
<circle cx="859.40" cy="586.30" r="1.3" fill="#c00000"/>
<text x="879.00" y="578.48" font-size="4.4" fill="#a6a6a6" textLength="5.38" lengthAdjust="spacingAndGlyphs" text-anchor="middle">PD</text>
<text x="844.90" y="602.38" font-size="4.4" fill="#a6a6a6" textLength="2.58" lengthAdjust="spacingAndGlyphs" text-anchor="middle">S</text>
<text x="806.40" y="631.28" font-size="4.4" fill="#a6a6a6" textLength="6.67" lengthAdjust="spacingAndGlyphs" text-anchor="middle">N/D</text>
<text x="903.00" y="631.28" font-size="4.4" fill="#a6a6a6" textLength="2.80" lengthAdjust="spacingAndGlyphs" text-anchor="middle">C</text>
<text x="839.70" y="649.58" font-size="4.4" fill="#a6a6a6" textLength="3.01" lengthAdjust="spacingAndGlyphs" text-anchor="middle">O</text>
<text x="789.80" y="600.39" font-size="4.7" fill="#6a6a6a" textLength="22.76" lengthAdjust="spacingAndGlyphs" text-anchor="middle" transform="rotate(-40 789.80 598.70)" stroke="#6a6a6a" stroke-width="0.12">% Hydrogen</text>
<text x="792.80" y="605.69" font-size="4.7" fill="#6a6a6a" textLength="14.36" lengthAdjust="spacingAndGlyphs" text-anchor="middle" transform="rotate(-40 792.80 604.00)" stroke="#6a6a6a" stroke-width="0.12">(H2) --&gt;</text>
<text x="918.70" y="596.89" font-size="4.7" fill="#6a6a6a" textLength="20.92" lengthAdjust="spacingAndGlyphs" text-anchor="middle" transform="rotate(40 918.70 595.20)" stroke="#6a6a6a" stroke-width="0.12">% Methane</text>
<text x="915.70" y="602.39" font-size="4.7" fill="#6a6a6a" textLength="17.35" lengthAdjust="spacingAndGlyphs" text-anchor="middle" transform="rotate(40 915.70 600.70)" stroke="#6a6a6a" stroke-width="0.12">(CH4) --&gt;</text>
<text x="850.50" y="658.88" font-size="4.4" fill="#868686" textLength="22.71" lengthAdjust="spacingAndGlyphs" text-anchor="middle">&lt;-- % Ethane</text>
<text x="850.50" y="664.78" font-size="4.4" fill="#868686" textLength="12.48" lengthAdjust="spacingAndGlyphs" text-anchor="middle">(C2H6)</text>
<clipPath id="c5"><rect x="740" y="680" width="520" height="99.6"/></clipPath><g clip-path="url(#c5)">
<text x="850.00" y="694.93" font-size="6.2" fill="#404040" textLength="28.00" lengthAdjust="spacingAndGlyphs" text-anchor="middle" font-weight="bold">Triangle 5</text>
<path d="M853.80 716.40 L863.10 724.40 L848.20 737.50" fill="none" stroke="#9dc3e6" stroke-width="1.0" stroke-linejoin="miter"/>
<path d="M853.80 716.40 L839.80 729.10" fill="none" stroke="#8faadc" stroke-width="2.0" stroke-linejoin="miter"/>
<path d="M839.80 729.10 L848.20 737.50" fill="none" stroke="#2f5597" stroke-width="1.0" stroke-linejoin="miter"/>
<path d="M863.10 724.40 L888.30 745.50" fill="none" stroke="#bfbfbf" stroke-width="1.0" stroke-linejoin="miter"/>
<path d="M888.30 745.50 L935.00 785.00" fill="none" stroke="#70ad47" stroke-width="1.0" stroke-linejoin="miter"/>
<path d="M888.30 745.50 L858.40 770.50" fill="none" stroke="#70ad47" stroke-width="1.0" stroke-linejoin="miter"/>
<path d="M839.80 729.10 L804.30 759.90" fill="none" stroke="#f5a56e" stroke-width="1.0" stroke-linejoin="miter"/>
<path d="M848.20 737.50 L834.20 749.60" fill="none" stroke="#f5a56e" stroke-width="1.0" stroke-linejoin="miter"/>
<path d="M834.20 749.60 L858.40 770.50" fill="none" stroke="#2f5597" stroke-width="1.0" stroke-linejoin="miter"/>
<path d="M834.20 749.60 L797.00 781.00" fill="none" stroke="#7f6f7f" stroke-width="1.0" stroke-linejoin="miter"/>
<path d="M804.30 759.90 L778.00 782.00" fill="none" stroke="#ffc000" stroke-width="1.0" stroke-linejoin="miter"/>
<path d="M801.50 760.40 L810.90 768.00" fill="none" stroke="#ffc000" stroke-width="1.0" stroke-linejoin="miter"/>
<path d="M858.40 770.50 L846.00 781.00" fill="none" stroke="#2f5597" stroke-width="1.0" stroke-linejoin="miter"/>
<circle cx="804.00" cy="758.00" r="1.3" fill="#c00000"/>
<circle cx="831.40" cy="753.30" r="1.3" fill="#c00000"/>
<circle cx="838.30" cy="767.30" r="1.3" fill="#c00000"/>
<text x="837.00" y="723.58" font-size="4.4" fill="#a6a6a6" textLength="5.38" lengthAdjust="spacingAndGlyphs" text-anchor="middle">PD</text>
<text x="852.80" y="727.88" font-size="4.4" fill="#a6a6a6" textLength="3.01" lengthAdjust="spacingAndGlyphs" text-anchor="middle">O</text>
<text x="865.30" y="747.08" font-size="4.4" fill="#a6a6a6" textLength="2.80" lengthAdjust="spacingAndGlyphs" text-anchor="middle">C</text>
<text x="819.30" y="757.18" font-size="4.4" fill="#a6a6a6" textLength="2.58" lengthAdjust="spacingAndGlyphs" text-anchor="middle">S</text>
<text x="832.30" y="775.38" font-size="4.4" fill="#a6a6a6" textLength="6.67" lengthAdjust="spacingAndGlyphs" text-anchor="middle">N/D</text>
<text x="876.10" y="775.38" font-size="4.4" fill="#a6a6a6" textLength="4.52" lengthAdjust="spacingAndGlyphs" text-anchor="middle">T3</text>
<text x="790.40" y="779.58" font-size="4.4" fill="#a6a6a6" textLength="3.01" lengthAdjust="spacingAndGlyphs" text-anchor="middle">O</text>
<text x="790.40" y="749.69" font-size="4.7" fill="#6a6a6a" textLength="20.92" lengthAdjust="spacingAndGlyphs" text-anchor="middle" transform="rotate(-40 790.40 748.00)" stroke="#6a6a6a" stroke-width="0.12">% Methane</text>
<text x="793.40" y="754.99" font-size="4.7" fill="#6a6a6a" textLength="17.35" lengthAdjust="spacingAndGlyphs" text-anchor="middle" transform="rotate(-40 793.40 753.30)" stroke="#6a6a6a" stroke-width="0.12">(CH4) --&gt;</text>
<text x="918.50" y="743.99" font-size="4.7" fill="#6a6a6a" textLength="20.92" lengthAdjust="spacingAndGlyphs" text-anchor="middle" transform="rotate(40 918.50 742.30)" stroke="#6a6a6a" stroke-width="0.12">% Ethylene</text>
<text x="915.50" y="749.49" font-size="4.7" fill="#6a6a6a" textLength="19.65" lengthAdjust="spacingAndGlyphs" text-anchor="middle" transform="rotate(40 915.50 747.80)" stroke="#6a6a6a" stroke-width="0.12">(C2H4) --&gt;</text>
</g>
<rect x="955.10" y="393.60" width="280.90" height="7.70" fill="#d9e1f2"/>
<rect x="955.10" y="409.00" width="280.90" height="7.40" fill="#d9e1f2"/>
<rect x="955.10" y="424.60" width="280.90" height="7.70" fill="#d9e1f2"/>
<rect x="955.10" y="439.70" width="280.90" height="8.10" fill="#d9e1f2"/>
<rect x="955.10" y="455.20" width="280.90" height="8.10" fill="#d9e1f2"/>
<rect x="955.10" y="393.00" width="280.90" height="1.90" fill="#7f9cd6"/>
<rect x="955.10" y="469.65" width="280.90" height="0.90" fill="#4472c4"/>
<text x="957.00" y="391.50" font-size="5.0" fill="#203864" textLength="10.73" lengthAdjust="spacingAndGlyphs" text-anchor="start" font-weight="bold">Date</text>
<text x="991.90" y="391.50" font-size="5.0" fill="#203864" textLength="24.48" lengthAdjust="spacingAndGlyphs" text-anchor="start" font-weight="bold">%Methane</text>
<text x="1033.60" y="391.50" font-size="5.0" fill="#203864" textLength="25.03" lengthAdjust="spacingAndGlyphs" text-anchor="start" font-weight="bold">%Ethylene</text>
<text x="1070.20" y="391.50" font-size="5.0" fill="#203864" textLength="27.79" lengthAdjust="spacingAndGlyphs" text-anchor="start" font-weight="bold">%Acetylene</text>
<text x="1106.30" y="391.50" font-size="5.0" fill="#203864" textLength="23.65" lengthAdjust="spacingAndGlyphs" text-anchor="start" font-weight="bold">Diagnosis</text>
<text x="988.80" y="399.20" font-size="5.0" fill="#2b4a86" textLength="21.84" lengthAdjust="spacingAndGlyphs" text-anchor="end">20/Feb/23</text>
<text x="1030.70" y="399.20" font-size="5.0" fill="#2b4a86" textLength="9.44" lengthAdjust="spacingAndGlyphs" text-anchor="end">76.9</text>
<text x="1066.90" y="399.20" font-size="5.0" fill="#2b4a86" textLength="9.44" lengthAdjust="spacingAndGlyphs" text-anchor="end">15.4</text>
<text x="1103.40" y="399.20" font-size="5.0" fill="#2b4a86" textLength="6.74" lengthAdjust="spacingAndGlyphs" text-anchor="end">7.7</text>
<text x="1106.30" y="399.20" font-size="5.0" fill="#2b4a86" textLength="109.90" lengthAdjust="spacingAndGlyphs" text-anchor="start">DT =&gt; Mixtures of electrical and thermal faults.</text>
<text x="988.80" y="406.70" font-size="5.0" fill="#2b4a86" textLength="21.30" lengthAdjust="spacingAndGlyphs" text-anchor="end">30/Jan/21</text>
<text x="1030.70" y="406.70" font-size="5.0" fill="#2b4a86" textLength="9.44" lengthAdjust="spacingAndGlyphs" text-anchor="end">58.8</text>
<text x="1066.90" y="406.70" font-size="5.0" fill="#2b4a86" textLength="9.44" lengthAdjust="spacingAndGlyphs" text-anchor="end">35.3</text>
<text x="1103.40" y="406.70" font-size="5.0" fill="#2b4a86" textLength="6.74" lengthAdjust="spacingAndGlyphs" text-anchor="end">5.9</text>
<text x="1106.30" y="406.70" font-size="5.0" fill="#2b4a86" textLength="109.90" lengthAdjust="spacingAndGlyphs" text-anchor="start">DT =&gt; Mixtures of electrical and thermal faults.</text>
<text x="988.80" y="414.70" font-size="5.0" fill="#2b4a86" textLength="21.30" lengthAdjust="spacingAndGlyphs" text-anchor="end">19/Jun/18</text>
<text x="1030.70" y="414.70" font-size="5.0" fill="#2b4a86" textLength="12.14" lengthAdjust="spacingAndGlyphs" text-anchor="end">100.0</text>
<text x="1066.90" y="414.70" font-size="5.0" fill="#2b4a86" textLength="6.74" lengthAdjust="spacingAndGlyphs" text-anchor="end">0.0</text>
<text x="1103.40" y="414.70" font-size="5.0" fill="#2b4a86" textLength="6.74" lengthAdjust="spacingAndGlyphs" text-anchor="end">0.0</text>
<text x="1106.30" y="414.70" font-size="5.0" fill="#2b4a86" textLength="56.60" lengthAdjust="spacingAndGlyphs" text-anchor="start">PD =&gt; Partial Discharges</text>
<rect x="955.10" y="531.85" width="280.90" height="0.90" fill="#4472c4"/>
<rect x="955.10" y="539.70" width="280.90" height="8.10" fill="#d9e1f2"/>
<rect x="955.10" y="555.20" width="280.90" height="8.10" fill="#d9e1f2"/>
<rect x="955.10" y="570.30" width="280.90" height="8.10" fill="#d9e1f2"/>
<rect x="955.10" y="585.60" width="280.90" height="8.40" fill="#d9e1f2"/>
<rect x="955.10" y="601.30" width="280.90" height="8.20" fill="#d9e1f2"/>
<rect x="955.10" y="539.10" width="280.90" height="1.90" fill="#7f9cd6"/>
<rect x="955.10" y="677.85" width="280.90" height="0.90" fill="#4472c4"/>
<text x="957.00" y="538.00" font-size="5.0" fill="#203864" textLength="10.73" lengthAdjust="spacingAndGlyphs" text-anchor="start" font-weight="bold">Date</text>
<text x="991.90" y="538.00" font-size="5.0" fill="#203864" textLength="27.50" lengthAdjust="spacingAndGlyphs" text-anchor="start" font-weight="bold">%Hydrogen</text>
<text x="1033.60" y="538.00" font-size="5.0" fill="#203864" textLength="24.48" lengthAdjust="spacingAndGlyphs" text-anchor="start" font-weight="bold">%Methane</text>
<text x="1070.20" y="538.00" font-size="5.0" fill="#203864" textLength="20.90" lengthAdjust="spacingAndGlyphs" text-anchor="start" font-weight="bold">%Ethane</text>
<text x="1106.30" y="538.00" font-size="5.0" fill="#203864" textLength="23.65" lengthAdjust="spacingAndGlyphs" text-anchor="start" font-weight="bold">Diagnosis</text>
<text x="988.80" y="545.80" font-size="5.0" fill="#2b4a86" textLength="21.84" lengthAdjust="spacingAndGlyphs" text-anchor="end">20/Feb/23</text>
<text x="1030.70" y="545.80" font-size="5.0" fill="#2b4a86" textLength="9.44" lengthAdjust="spacingAndGlyphs" text-anchor="end">78.9</text>
<text x="1066.90" y="545.80" font-size="5.0" fill="#2b4a86" textLength="9.44" lengthAdjust="spacingAndGlyphs" text-anchor="end">13.2</text>
<text x="1103.40" y="545.80" font-size="5.0" fill="#2b4a86" textLength="6.74" lengthAdjust="spacingAndGlyphs" text-anchor="end">7.9</text>
<text x="1106.30" y="545.80" font-size="5.0" fill="#2b4a86" textLength="80.20" lengthAdjust="spacingAndGlyphs" text-anchor="start">S =&gt; Stray gassing of Oil (&lt; 200 oC)</text>
<text x="988.80" y="553.40" font-size="5.0" fill="#2b4a86" textLength="21.30" lengthAdjust="spacingAndGlyphs" text-anchor="end">30/Jan/21</text>
<text x="1030.70" y="553.40" font-size="5.0" fill="#2b4a86" textLength="9.44" lengthAdjust="spacingAndGlyphs" text-anchor="end">83.3</text>
<text x="1066.90" y="553.40" font-size="5.0" fill="#2b4a86" textLength="6.74" lengthAdjust="spacingAndGlyphs" text-anchor="end">8.3</text>
<text x="1103.40" y="553.40" font-size="5.0" fill="#2b4a86" textLength="6.74" lengthAdjust="spacingAndGlyphs" text-anchor="end">8.3</text>
<text x="1106.30" y="553.40" font-size="5.0" fill="#2b4a86" textLength="80.20" lengthAdjust="spacingAndGlyphs" text-anchor="start">S =&gt; Stray gassing of Oil (&lt; 200 oC)</text>
<text x="988.80" y="561.00" font-size="5.0" fill="#2b4a86" textLength="21.30" lengthAdjust="spacingAndGlyphs" text-anchor="end">19/Jun/18</text>
<text x="1030.70" y="561.00" font-size="5.0" fill="#2b4a86" textLength="9.44" lengthAdjust="spacingAndGlyphs" text-anchor="end">92.6</text>
<text x="1066.90" y="561.00" font-size="5.0" fill="#2b4a86" textLength="6.74" lengthAdjust="spacingAndGlyphs" text-anchor="end">3.7</text>
<text x="1103.40" y="561.00" font-size="5.0" fill="#2b4a86" textLength="6.74" lengthAdjust="spacingAndGlyphs" text-anchor="end">3.7</text>
<text x="1106.30" y="561.00" font-size="5.0" fill="#2b4a86" textLength="80.20" lengthAdjust="spacingAndGlyphs" text-anchor="start">S =&gt; Stray gassing of Oil (&lt; 200 oC)</text>
<rect x="955.10" y="686.00" width="280.90" height="8.00" fill="#d9e1f2"/>
<rect x="955.10" y="701.60" width="280.90" height="7.80" fill="#d9e1f2"/>
<rect x="955.10" y="716.40" width="280.90" height="8.00" fill="#d9e1f2"/>
<rect x="955.10" y="732.40" width="280.90" height="8.00" fill="#d9e1f2"/>
<rect x="955.10" y="747.60" width="280.90" height="8.00" fill="#d9e1f2"/>
<text x="957.00" y="684.80" font-size="5.0" fill="#203864" textLength="10.73" lengthAdjust="spacingAndGlyphs" text-anchor="start" font-weight="bold">Date</text>
<text x="991.90" y="684.80" font-size="5.0" fill="#203864" textLength="24.48" lengthAdjust="spacingAndGlyphs" text-anchor="start" font-weight="bold">%Methane</text>
<text x="1033.60" y="684.80" font-size="5.0" fill="#203864" textLength="25.03" lengthAdjust="spacingAndGlyphs" text-anchor="start" font-weight="bold">%Ethylene</text>
<text x="1070.20" y="684.80" font-size="5.0" fill="#203864" textLength="20.90" lengthAdjust="spacingAndGlyphs" text-anchor="start" font-weight="bold">%Ethane</text>
<text x="1106.30" y="684.80" font-size="5.0" fill="#203864" textLength="23.65" lengthAdjust="spacingAndGlyphs" text-anchor="start" font-weight="bold">Diagnosis</text>
<text x="988.80" y="692.00" font-size="5.0" fill="#2b4a86" textLength="21.84" lengthAdjust="spacingAndGlyphs" text-anchor="end">20/Feb/23</text>
<text x="1030.70" y="692.00" font-size="5.0" fill="#2b4a86" textLength="9.44" lengthAdjust="spacingAndGlyphs" text-anchor="end">55.6</text>
<text x="1066.90" y="692.00" font-size="5.0" fill="#2b4a86" textLength="9.08" lengthAdjust="spacingAndGlyphs" text-anchor="end">11.1</text>
<text x="1103.40" y="692.00" font-size="5.0" fill="#2b4a86" textLength="9.44" lengthAdjust="spacingAndGlyphs" text-anchor="end">33.3</text>
<text x="1106.30" y="692.00" font-size="5.0" fill="#2b4a86" textLength="53.70" lengthAdjust="spacingAndGlyphs" text-anchor="start">ND =&gt; Not Determined</text>
<text x="988.80" y="699.60" font-size="5.0" fill="#2b4a86" textLength="21.30" lengthAdjust="spacingAndGlyphs" text-anchor="end">30/Jan/21</text>
<text x="1030.70" y="699.60" font-size="5.0" fill="#2b4a86" textLength="9.44" lengthAdjust="spacingAndGlyphs" text-anchor="end">38.5</text>
<text x="1066.90" y="699.60" font-size="5.0" fill="#2b4a86" textLength="9.44" lengthAdjust="spacingAndGlyphs" text-anchor="end">23.1</text>
<text x="1103.40" y="699.60" font-size="5.0" fill="#2b4a86" textLength="9.44" lengthAdjust="spacingAndGlyphs" text-anchor="end">38.5</text>
<text x="1106.30" y="699.60" font-size="5.0" fill="#2b4a86" textLength="53.70" lengthAdjust="spacingAndGlyphs" text-anchor="start">ND =&gt; Not Determined</text>
<text x="988.80" y="707.20" font-size="5.0" fill="#2b4a86" textLength="21.30" lengthAdjust="spacingAndGlyphs" text-anchor="end">19/Jun/18</text>
<text x="1030.70" y="707.20" font-size="5.0" fill="#2b4a86" textLength="9.44" lengthAdjust="spacingAndGlyphs" text-anchor="end">50.0</text>
<text x="1066.90" y="707.20" font-size="5.0" fill="#2b4a86" textLength="6.74" lengthAdjust="spacingAndGlyphs" text-anchor="end">0.0</text>
<text x="1103.40" y="707.20" font-size="5.0" fill="#2b4a86" textLength="9.44" lengthAdjust="spacingAndGlyphs" text-anchor="end">50.0</text>
<text x="1106.30" y="707.20" font-size="5.0" fill="#2b4a86" textLength="80.20" lengthAdjust="spacingAndGlyphs" text-anchor="start">S =&gt; Stray gassing of Oil (&lt; 200 oC)</text>
<rect x="950.70" y="471.10" width="185.00" height="48.00" fill="#fff" stroke="#404040" stroke-width="1.3"/>
<text x="954.00" y="478.40" font-size="5.0" fill="#767676" textLength="176.90" lengthAdjust="spacingAndGlyphs" text-anchor="start">a fault appearing in zone D2 may also be due in some cases to a mixture of</text>
<text x="954.00" y="485.90" font-size="5.0" fill="#767676" textLength="39.00" lengthAdjust="spacingAndGlyphs" text-anchor="start">faults D1 and T3.</text>
<rect x="950.70" y="615.30" width="185.00" height="48.00" fill="#fff" stroke="#404040" stroke-width="1.3"/>
<text x="954.00" y="622.90" font-size="5.0" fill="#767676" textLength="173.00" lengthAdjust="spacingAndGlyphs" text-anchor="start">The Duval Triangle 4 for low temperature faults in mineral oils uses gases</text>
<text x="954.00" y="630.20" font-size="5.0" fill="#767676" textLength="44.00" lengthAdjust="spacingAndGlyphs" text-anchor="start">H2, CH4 and C2H6.</text>
<text x="954.00" y="637.00" font-size="5.0" fill="#767676" textLength="152.00" lengthAdjust="spacingAndGlyphs" text-anchor="start">The Duval Triangle 4 is used to get more information about faults</text>
<text x="954.00" y="644.60" font-size="5.0" fill="#767676" textLength="177.00" lengthAdjust="spacingAndGlyphs" text-anchor="start">identified as low temperature faults(PD, T1 or T2) with Duval Triangle 1 for</text>
<text x="954.00" y="651.00" font-size="5.0" fill="#767676" textLength="95.00" lengthAdjust="spacingAndGlyphs" text-anchor="start">mineral oils(using CH4, C2H4 and C2H2).</text>
<text x="954.00" y="657.80" font-size="5.0" fill="#767676" textLength="133.00" lengthAdjust="spacingAndGlyphs" text-anchor="start">Do not use the Duval Triangle 4 for faults D1, D2 or T3....</text>
<clipPath id="c6"><rect x="940" y="750" width="300" height="29.6"/></clipPath><g clip-path="url(#c6)">
<rect x="950.70" y="760.40" width="185.00" height="39.60" fill="#fff" stroke="#404040" stroke-width="1.3"/>
<text x="954.00" y="767.20" font-size="5.0" fill="#767676" textLength="163.00" lengthAdjust="spacingAndGlyphs" text-anchor="start">The Duval Triangle 5 for thermal faults in mineral oils uses gases CH4,</text>
<text x="954.00" y="774.80" font-size="5.0" fill="#767676" textLength="38.00" lengthAdjust="spacingAndGlyphs" text-anchor="start">C2H4 and C2H6.</text>
<text x="954.00" y="782.40" font-size="5.0" fill="#767676" textLength="150.00" lengthAdjust="spacingAndGlyphs" text-anchor="start">The Duval Triangle 5 is used to have more information about faults</text>
</g></g></svg>
</body></html>
